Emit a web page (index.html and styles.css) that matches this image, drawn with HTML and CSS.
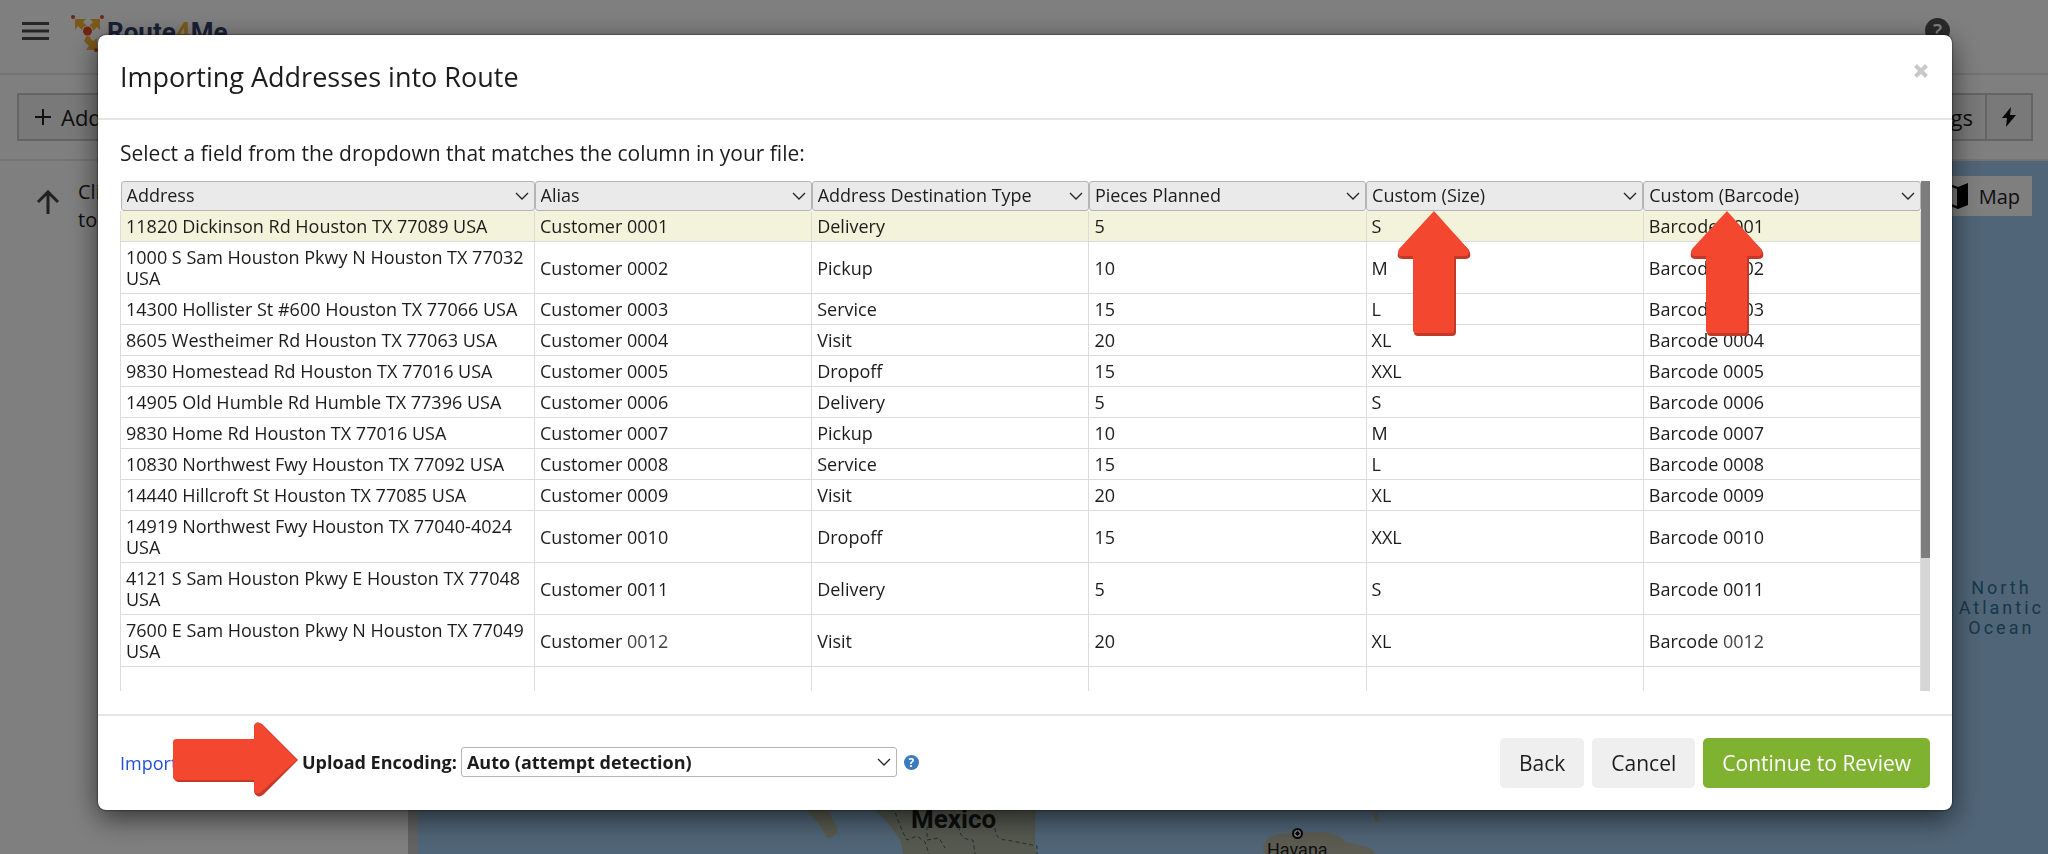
FILE: index.html
```html
<!DOCTYPE html>
<html lang="en">
<head>
<meta charset="utf-8">
<title>Importing Addresses into Route</title>
<link rel="stylesheet" href="styles.css">
</head>
<body>
<div class="app">
  <header class="topbar">
    <button class="icon-button" type="button" aria-label="Menu">
      <svg width="27" height="18" viewBox="0 0 27 18"><path d="M0 1.500h27M0 9h27M0 16.500h27" stroke="#4a4a4a" stroke-width="3"/></svg>
    </button>
    <a class="brand" href="#">
      <svg class="brand-mark" width="36" height="42" viewBox="0 0 36 42">
        <path d="M4 5h11l-3 3 5 5 5-5-3-3h10v11l-3-3-7 7v4l3 3 4-3v12H15l3-4-5-5 2-4-2-5-6-6-3 4z" fill="#f7b334"/>
        <circle cx="16.500" cy="17" r="5.500" fill="#fff"/>
        <circle cx="16.500" cy="17" r="4.500" fill="#e8491d"/>
        <circle cx="2" cy="3" r="2" fill="#e8491d"/><circle cx="31" cy="3" r="2" fill="#e8491d"/><circle cx="25" cy="36" r="2" fill="#e8491d"/>
      </svg>
      <span class="brand-name">Route<span class="brand-four">4</span>Me</span>
    </a>
    <button class="help-button" type="button" aria-label="Help">?</button>
  </header>
  <div class="toolbar">
    <button class="tool" type="button">
      <svg width="16" height="16" viewBox="0 0 16 16"><path d="M8 0v16M0 8h16" stroke="#222" stroke-width="2"/></svg>
      Add Address
    </button>
    <div class="tool-group">
      <button class="tool" type="button">Settings</button>
      <button class="tool tool-square" type="button" aria-label="Quick actions">
        <svg width="14" height="20" viewBox="0 0 14 20"><path d="M9 0L0 11h5l-1 9L14 8H8z" fill="#111"/></svg>
      </button>
    </div>
  </div>
  <div class="workspace">
    <aside class="side">
      <svg class="side-arrow" width="24" height="24" viewBox="0 0 24 24"><path d="M12 24V2M2 12L12 2l10 10" fill="none" stroke="#444" stroke-width="3"/></svg>
      <p class="side-hint">Click the button<br>to add addresses</p>
    </aside>
    <div class="map">
      <button class="map-button" type="button">
        <svg width="32" height="28" viewBox="0 0 32 28"><path d="M0 5l10-4 11 4 10-4v22l-10 4-11-4-10 4z" fill="#000"/><path d="M12 4l8 3v17l-8-3z" fill="#eee"/></svg>
        Map
      </button>
      <span class="ocean">North<br>Atlantic<br>Ocean</span>
      <svg class="land" width="1170" height="56" viewBox="0 0 1170 56">
        <path d="M386 10q14 12 23 30 8 0 10-6 2-4-4-12-2-6-8-12z" fill="#b3b7a2"/>
        <path d="M452 8q18 14 30 34 2 6 3 14h133q-2-18 0-48z" fill="#aab3a0"/>
        <path d="M475 8q8 24 14 34l10-4 8 6 4 12M509 28v14l12-2 6 10M541 28q0 14 14 14l2 14M577 30q0 12 12 12l30 6v8" fill="none" stroke="#555" stroke-dasharray="4 3"/>
        <path d="M846 56q-4-16 14-20l30-2q28-2 38 10l14 3q14 3 16 9z" fill="#b9b8a5"/>
        <path d="M954 12q8 4 7 12h-4z" fill="#b3b7a2"/>
      </svg>
      <span class="mexico">Mexico</span>
      <span class="havana-dot"></span>
      <span class="havana">Havana</span>
    </div>
  </div>
</div>
<div class="backdrop">
  <section class="modal" role="dialog" aria-labelledby="modal-title">
    <header class="modal-head">
      <h1 class="modal-title" id="modal-title">Importing Addresses into Route</h1>
      <button class="close" type="button" aria-label="Close">
        <svg width="14" height="14" viewBox="0 0 14 14"><path d="M1.500 1.500l11 11M12.500 1.500l-11 11" stroke="#c8c8c8" stroke-width="4"/></svg>
      </button>
    </header>
    <div class="modal-body">
      <p class="lead">Select a field from the dropdown that matches the column in your file:</p>
      <div class="sheet">
        <div class="sheet-view">
          <table class="grid">
            <colgroup><col class="col-wide"><col><col><col><col><col></colgroup>
            <thead><tr>
              <th><select class="field" aria-label="Column 1 field"><option>Address</option></select></th>
              <th><select class="field" aria-label="Column 2 field"><option>Alias</option></select></th>
              <th><select class="field" aria-label="Column 3 field"><option>Address Destination Type</option></select></th>
              <th><select class="field" aria-label="Column 4 field"><option>Pieces Planned</option></select></th>
              <th><select class="field" aria-label="Column 5 field"><option>Custom (Size)</option></select></th>
              <th><select class="field" aria-label="Column 6 field"><option>Custom (Barcode)</option></select></th>
            </tr></thead>
            <tbody>
              <tr class="first"><td>11820 Dickinson Rd Houston TX 77089 USA</td><td>Customer 0001</td><td>Delivery</td><td>5</td><td>S</td><td>Barcode 0001</td></tr>
              <tr><td>1000 S Sam Houston Pkwy N Houston TX 77032 USA</td><td>Customer 0002</td><td>Pickup</td><td>10</td><td>M</td><td>Barcode 0002</td></tr>
              <tr><td>14300 Hollister St #600 Houston TX 77066 USA</td><td>Customer 0003</td><td>Service</td><td>15</td><td>L</td><td>Barcode 0003</td></tr>
              <tr><td>8605 Westheimer Rd Houston TX 77063 USA</td><td>Customer 0004</td><td>Visit</td><td>20</td><td>XL</td><td>Barcode 0004</td></tr>
              <tr><td>9830 Homestead Rd Houston TX 77016 USA</td><td>Customer 0005</td><td>Dropoff</td><td>15</td><td>XXL</td><td>Barcode 0005</td></tr>
              <tr><td>14905 Old Humble Rd Humble TX 77396 USA</td><td>Customer 0006</td><td>Delivery</td><td>5</td><td>S</td><td>Barcode 0006</td></tr>
              <tr><td>9830 Home Rd Houston TX 77016 USA</td><td>Customer 0007</td><td>Pickup</td><td>10</td><td>M</td><td>Barcode 0007</td></tr>
              <tr><td>10830 Northwest Fwy Houston TX 77092 USA</td><td>Customer 0008</td><td>Service</td><td>15</td><td>L</td><td>Barcode 0008</td></tr>
              <tr><td>14440 Hillcroft St Houston TX 77085 USA</td><td>Customer 0009</td><td>Visit</td><td>20</td><td>XL</td><td>Barcode 0009</td></tr>
              <tr><td>14919 Northwest Fwy Houston TX 77040-4024 USA</td><td>Customer 0010</td><td>Dropoff</td><td>15</td><td>XXL</td><td>Barcode 0010</td></tr>
              <tr><td>4121 S Sam Houston Pkwy E Houston TX 77048 USA</td><td>Customer 0011</td><td>Delivery</td><td>5</td><td>S</td><td>Barcode 0011</td></tr>
              <tr><td>7600 E Sam Houston Pkwy N Houston TX 77049 USA</td><td>Customer <span class="soft">0012</span></td><td>Visit</td><td>20</td><td>XL</td><td>Barcode <span class="soft">0012</span></td></tr>
              <tr><td>&nbsp;</td><td></td><td></td><td></td><td></td><td></td></tr>
            </tbody>
          </table>
        </div>
        <div class="scroll"><div class="thumb"></div></div>
        <svg class="pointer pointer-size" width="74" height="127" viewBox="0 0 74 127"><path d="M37 3L72 40q4 9-4 9H59V122q0 4-4 4H21q-4 0-4-4V49H6q-8 0-4-9z" fill="#c23a27"/><path d="M37 1L71 39q3 7-4 7H57V120q0 3-3 3H19q-3 0-3-3V46H6q-7 0-4-7z" fill="#f4472f"/></svg>
        <svg class="pointer pointer-barcode" width="74" height="127" viewBox="0 0 74 127"><path d="M37 3L72 40q4 9-4 9H59V122q0 4-4 4H21q-4 0-4-4V49H6q-8 0-4-9z" fill="#c23a27"/><path d="M37 1L71 39q3 7-4 7H57V120q0 3-3 3H19q-3 0-3-3V46H6q-7 0-4-7z" fill="#f4472f"/></svg>
      </div>
    </div>
    <footer class="modal-foot">
      <a class="import-link" href="#">Import Instructions</a>
      <div class="encoding-group">
        <label class="enc-label" for="encoding">Upload Encoding:</label>
        <select class="encoding" id="encoding"><option>Auto (attempt detection)</option></select>
        <button class="hint" type="button" aria-label="Encoding help">?</button>
      </div>
      <div class="actions">
        <button class="btn" type="button">Back</button>
        <button class="btn" type="button">Cancel</button>
        <button class="btn btn-primary" type="button">Continue to Review</button>
      </div>
      <svg class="pointer pointer-encoding" width="126" height="75" viewBox="0 0 126 75"><path d="M3 17H81V4q2-6 8-2L125 38 90 73q-6 4-9-3V60H6q-4 0-5-4z" fill="#c23a27"/><path d="M4 17H81V4q2-6 7-2L124 38 88 70q-5 4-7-2V58H4q-4 0-4-3V20q0-3 4-3z" fill="#f4472f"/></svg>
    </footer>
  </section>
</div>
</body>
</html>
```

FILE: styles.css
```css
* { box-sizing: border-box; }
body {
  margin: 0;
  height: 100vh;
  overflow: hidden;
  color: #1c1c1c;
  font-family: "Open Sans", "Noto Sans", sans-serif;
  font-size: 18px;
}
button, select { font: inherit; color: inherit; }
button { cursor: pointer; }

/* Application behind the dialog */
.app { display: flex; flex-direction: column; height: 100vh; background: #fff; }
.topbar { display: flex; align-items: center; height: 75px; padding: 0 98px 12px 22px; border-bottom: 2px solid #e6e6e6; }
.icon-button { display: flex; padding: 0; border: 0; background: none; }
.brand { display: flex; align-items: flex-start; margin-left: 22px; padding-top: 8px; text-decoration: none; }
.brand-name { color: #33406b; font-family: Roboto, sans-serif; font-size: 26px; font-weight: 700; line-height: 36px; }
.brand-four { color: #f7b334; }
.help-button { width: 25px; height: 25px; margin-left: auto; padding: 0; border: 0; border-radius: 50%; background: #555; color: #fff; font-size: 20px; font-weight: 600; line-height: 25px; }
.toolbar { display: flex; justify-content: space-between; align-items: center; height: 86px; padding: 0 15px 0 17px; border-bottom: 2px solid #e6e6e6; }
.tool { display: flex; align-items: center; gap: 10px; height: 48px; padding: 0 16px; border: 2px solid #c8c8c8; background: #f2f2f2; font-size: 22px; }
.tool-group { display: flex; }
.tool-group .tool:first-child { border-right: 0; padding: 0 12px; }
.tool-square { justify-content: center; width: 48px; padding: 0; }
.workspace { display: flex; flex: 1; min-height: 0; }
.side { display: flex; align-items: flex-start; gap: 18px; width: 418px; padding: 17px 0 0 36px; border-right: 10px solid #c6c6c6; }
.side-arrow { margin-top: 12px; }
.side-hint { margin: 0; font-size: 20px; line-height: 28px; }
.map { position: relative; flex: 1; overflow: hidden; background: #a0caee; }
.map-button { position: absolute; top: 15px; right: 16px; display: flex; align-items: center; gap: 10px; height: 40px; padding: 0 12px; border: 0; background: #fff; font-size: 20px; }
.ocean { position: absolute; top: 417px; right: 4px; color: #2f7094; font-family: Roboto, sans-serif; font-size: 18px; letter-spacing: 3px; line-height: 20px; text-align: center; }
.land { position: absolute; left: 0; bottom: 0; }
.mexico { position: absolute; left: 493px; bottom: 20px; font-family: Roboto, sans-serif; font-size: 26px; font-weight: 700; line-height: 30px; }
.havana-dot { position: absolute; left: 874px; bottom: 15px; width: 11px; height: 11px; border: 2px solid #111; border-radius: 50%; background: radial-gradient(#111 40%, #eee 45%); }
.havana { position: absolute; left: 849px; bottom: -7px; font-family: Roboto, sans-serif; font-size: 18px; line-height: 22px; }

/* Dialog */
.backdrop { position: fixed; inset: 0; padding: 35px 96px 44px 98px; background: rgba(0, 0, 0, .5); }
.modal { display: flex; flex-direction: column; height: 100%; border-radius: 8px; background: #fff; box-shadow: 0 8px 28px rgba(0, 0, 0, .6), 0 0 2px #000; }
.modal-head { display: flex; justify-content: space-between; align-items: center; height: 85px; padding: 1px 24px 0 22px; border-bottom: 2px solid #e5e5e5; }
.modal-title { margin: 0; font-size: 27px; font-weight: 400; line-height: 36px; }
.close { display: flex; margin-bottom: 12px; padding: 0; border: 0; background: none; }
.modal-body { display: flex; flex: 1; flex-direction: column; min-height: 0; padding: 19px 22px 23px; }
.lead { margin: 0 0 14px; font-size: 21px; line-height: 28px; }
.sheet { position: relative; display: flex; flex: 1; min-height: 0; }
.sheet-view { flex: 1; overflow: hidden; }
.grid { width: 100%; border-collapse: collapse; table-layout: fixed; line-height: 21px; }
.col-wide { width: 23%; }
.grid th { padding: 0; font-weight: 400; }
.grid td { padding: 5px 4px 4px 5px; border: 1px solid #dcdcdc; border-top: 0; }
.first { background: #f3f2da; }
.soft { color: #444; }
.field, .encoding {
  appearance: none;
  display: block;
  width: 100%;
  height: 30px;
  padding: 0 24px 1px 5px;
  border: 1px solid #b5b5b5;
  border-radius: 3px;
  background: #eaeaea url("data:image/svg+xml,%3Csvg xmlns='http://www.w3.org/2000/svg' width='14' height='8' viewBox='0 0 14 8'%3E%3Cpath d='M1 1l6 6 6-6' fill='none' stroke='%23222' stroke-width='1.300'/%3E%3C/svg%3E") no-repeat right 5px center;
}
.scroll { width: 9px; background: #d6d6d6; }
.thumb { height: 74%; background: #7d7d7d; }

.modal-foot { position: relative; display: flex; align-items: center; height: 96px; padding: 0 22px; border-top: 2px solid #e5e5e5; }
.import-link { width: 182px; color: #2050d8; overflow: hidden; text-decoration: none; white-space: nowrap; }
.encoding-group { display: flex; align-items: center; padding-bottom: 2px; }
.enc-label { margin-right: 4px; font-weight: 700; }
.encoding { width: 436px; background-color: #fff; font-weight: 700; }
.hint { width: 15px; height: 15px; margin-left: 7px; padding: 0; border: 0; border-radius: 50%; background: #3a7bbf; color: #fff; font-size: 12px; font-weight: 700; line-height: 15px; }
.actions { display: flex; gap: 8px; margin-left: auto; }
.btn { height: 50px; padding: 0 19px; border: 0; border-radius: 5px; background: #efefef; font-size: 21px; }
.btn-primary { background: #80b232; color: #fff; }

/* Callout arrows over the dialog */
.pointer { position: absolute; }
.pointer-size { top: 29px; left: 1277px; }
.pointer-barcode { top: 29px; left: 1570px; }
.pointer-encoding { top: 6px; left: 75px; }
```
